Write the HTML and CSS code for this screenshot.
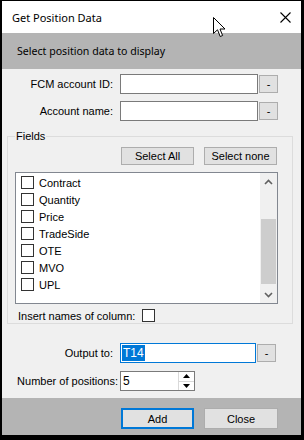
FILE: index.html
```html
<!DOCTYPE html>
<html lang="en">
<head>
  <meta charset="UTF-8">
  <title>Get Position Data</title>
  <link rel="stylesheet" href="styles.css">
</head>
<body>
  <div class="window">
    <div class="titlebar">
      <span>Get Position Data</span>
      <svg class="close-x" width="11" height="11" viewBox="0 0 11 11">
        <path d="M0.5 0.5 L10.5 10.5 M10.5 0.5 L0.5 10.5" stroke="#000" stroke-width="1.1"/>
      </svg>
    </div>
    <div class="header">Select position data to display</div>

    <div class="content">
      <div class="row first">
        <label class="row-label">FCM account ID:</label>
        <div class="textbox wide"></div>
        <button class="dots">-</button>
      </div>
      <div class="row second">
        <label class="row-label">Account name:</label>
        <div class="textbox wide"></div>
        <button class="dots">-</button>
      </div>

      <fieldset class="group">
        <legend>Fields</legend>
        <div class="select-buttons">
          <button class="btn">Select All</button>
          <button class="btn">Select none</button>
        </div>
        <div class="listbox">
          <ul class="items">
            <li><span class="check"></span>Contract</li>
            <li><span class="check"></span>Quantity</li>
            <li><span class="check"></span>Price</li>
            <li><span class="check"></span>TradeSide</li>
            <li><span class="check"></span>OTE</li>
            <li><span class="check"></span>MVO</li>
            <li><span class="check"></span>UPL</li>
          </ul>
          <div class="scrollbar">
            <div class="arrow">
              <svg width="9" height="6" viewBox="0 0 9 6"><path d="M1 5 L4.5 1.5 L8 5" fill="none" stroke="#606060" stroke-width="1.6"/></svg>
            </div>
            <div class="track"><div class="thumb"></div></div>
            <div class="arrow">
              <svg width="9" height="6" viewBox="0 0 9 6"><path d="M1 1 L4.5 4.5 L8 1" fill="none" stroke="#606060" stroke-width="1.6"/></svg>
            </div>
          </div>
        </div>
        <div class="insert-row">
          <span>Insert names of column:</span>
          <span class="check"></span>
        </div>
      </fieldset>

      <div class="row output">
        <label class="row-label">Output to:</label>
        <div class="textbox focused"><span class="selected">T14</span></div>
        <button class="dots">-</button>
      </div>
      <div class="row number">
        <label class="row-label long">Number of positions:</label>
        <div class="textbox spin">
          <span class="value">5</span>
          <div class="spinner">
            <div class="spin-btn"><svg width="7" height="4" viewBox="0 0 7 4"><path d="M0 4 L3.5 0 L7 4 Z" fill="#000"/></svg></div>
            <div class="spin-btn"><svg width="7" height="4" viewBox="0 0 7 4"><path d="M0 0 L3.5 4 L7 0 Z" fill="#000"/></svg></div>
          </div>
        </div>
      </div>
    </div>

    <div class="footer">
      <button class="btn default">Add</button>
      <button class="btn close">Close</button>
    </div>

    <svg class="cursor" width="13" height="21" viewBox="0 0 13 21">
      <path d="M0.5 0.5 L0.5 16.5 L4.5 12.8 L7.2 19.5 L9.6 18.5 L7 12 L12 12 Z" fill="#fff" stroke="#000" stroke-width="1"/>
    </svg>
  </div>
</body>
</html>
```

FILE: styles.css
```css
* {
  box-sizing: border-box;
}
body {
  margin: 0;
  width: 304px;
  height: 440px;
  overflow: hidden;
  background: #000;
  font-family: "Liberation Sans", Arial, sans-serif;
  font-size: 11px;
  color: #000;
}
.window {
  position: relative;
  margin: 1px 0 0 2px;
  width: 299px;
  height: 434px;
  background: #f0f0f0;
  display: flex;
  flex-direction: column;
}
.titlebar {
  height: 32px;
  flex: none;
  background: #fff;
  display: flex;
  align-items: center;
  justify-content: space-between;
  padding: 0 10px 0 10px;
  font-family: "Noto Sans", sans-serif;
  font-size: 11px;
}
.close-x {
  display: block;
}
.header {
  height: 36px;
  flex: none;
  background: #b4b4b4;
  display: flex;
  align-items: center;
  padding-left: 15px;
  font-family: "Noto Sans", sans-serif;
  font-size: 10.6px;
}
.content {
  flex: 1;
  padding-top: 5px;
}

/* label + textbox rows */
.row {
  display: flex;
  align-items: center;
  height: 20px;
}
.row.second {
  margin-top: 7px;
}
.row.output {
  margin-top: 19px;
}
.row.number {
  margin-top: 8px;
}
.row-label {
  width: 111px;
  text-align: right;
  margin-right: 7px;
  white-space: nowrap;
}
.row-label.long {
  width: 116px;
  margin-right: 2px;
}
.textbox {
  height: 20px;
  border: 1px solid #7a7a7a;
  background: #fff;
}
.textbox.wide {
  width: 138px;
}
.textbox.focused {
  width: 136px;
  border-color: #0078d7;
  padding: 1px 0 0 1px;
}
.selected {
  display: inline-block;
  background: #0078d7;
  color: #fff;
  height: 16px;
  line-height: 16px;
  padding: 0 1px;
  font-size: 12px;
}
.textbox.spin {
  width: 75px;
  display: flex;
  justify-content: space-between;
  padding-left: 2px;
}
.value {
  line-height: 18px;
  font-size: 12px;
}
.spinner {
  width: 16px;
  display: flex;
  flex-direction: column;
  border-left: 1px solid #d9d9d9;
}
.spin-btn {
  flex: 1;
  display: flex;
  align-items: center;
  justify-content: center;
  background: #fff;
}
.spin-btn + .spin-btn {
  border-top: 1px solid #d9d9d9;
}
.spin-btn svg {
  display: block;
}

button {
  font-family: inherit;
  font-size: 11px;
  color: #000;
  background: #e1e1e1;
  border: 1px solid #adadad;
  padding: 0;
  border-radius: 0;
}
.dots {
  width: 19px;
  height: 18px;
  margin-left: 1px;
}

/* group box */
.group {
  margin: 9px 0 0 5px;
  width: 286px;
  padding: 0 0 1px 0;
  border: 1px solid #dcdcdc;
  min-inline-size: 0;
}
.group legend {
  margin-left: 7px;
  padding: 0 1px;
  line-height: 13px;
}
.select-buttons {
  display: flex;
  gap: 10px;
  margin-top: 4px;
  padding-left: 113px;
}
.btn {
  width: 73px;
  height: 18px;
}
.listbox {
  margin: 7px 0 0 7px;
  width: 263px;
  height: 132px;
  border: 1px solid #828790;
  background: #fff;
  display: flex;
}
.items {
  flex: 1;
  list-style: none;
  margin: 0;
  padding: 1px 0 0 5px;
}
.items li {
  height: 17px;
  display: flex;
  align-items: center;
}
.check {
  width: 13px;
  height: 13px;
  border: 1px solid #333;
  background: #fff;
  margin-right: 5px;
  flex: none;
}
.scrollbar {
  width: 17px;
  background: #f0f0f0;
  display: flex;
  flex-direction: column;
}
.arrow {
  height: 17px;
  display: flex;
  align-items: center;
  justify-content: center;
}
.arrow svg {
  display: block;
}
.track {
  flex: 1;
  padding: 29px 1px 0 1px;
}
.thumb {
  height: 65px;
  background: #cdcdcd;
}
.insert-row {
  display: flex;
  align-items: center;
  gap: 7px;
  margin-top: 5px;
  padding-left: 10px;
  height: 13px;
}
.insert-row .check {
  margin-right: 0;
}

.footer {
  height: 37px;
  flex: none;
  background: #b4b4b4;
  display: flex;
  gap: 10px;
  padding: 10px 0 0 119px;
}
.footer .btn {
  height: 21px;
}
.footer .btn.default {
  border: 2px solid #0078d7;
}
.footer .btn.close {
  width: 74px;
}
.cursor {
  position: absolute;
  left: 211px;
  top: 16px;
}
```
